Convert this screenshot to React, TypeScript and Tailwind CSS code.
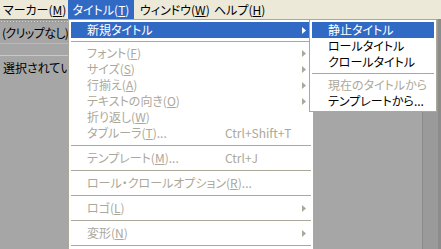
import React from "react";

const FONT = "[font-family:'Noto_Sans_CJK_JP','Liberation_Sans',sans-serif]";

function U({ c }: { c: string }) {
  return <span className="underline underline-offset-[1px]">{c}</span>;
}

function Arrow({ color }: { color: string }) {
  return (
    <svg width="4" height="7" viewBox="0 0 4 7" className="block">
      <path d="M0 0 L4 3.5 L0 7 Z" fill={color} />
    </svg>
  );
}

function Item({
  label,
  shortcut,
  arrow,
  disabled,
  active,
}: {
  label: React.ReactNode;
  shortcut?: string;
  arrow?: boolean;
  disabled?: boolean;
  active?: boolean;
}) {
  const color = active ? "text-white" : disabled ? "text-[#aca899]" : "text-black";
  return (
    <div
      className={`h-[16px] flex items-center pl-[16px] pr-[5px] ${active ? "bg-[#316ac5]" : ""} ${color}`}
    >
      <div className="flex-1 whitespace-nowrap leading-none">{label}</div>
      {shortcut && <div className="w-[75px] whitespace-nowrap leading-none">{shortcut}</div>}
      <div className="w-[6px] flex justify-end">
        {arrow && <Arrow color={active ? "#ffffff" : disabled ? "#aca899" : "#000000"} />}
      </div>
    </div>
  );
}

function Sep({ h = 9 }: { h?: number }) {
  return (
    <div className={`${h === 7 ? "h-[7px]" : "h-[9px]"} flex items-center`}>
      <div className="h-px w-full bg-[#aca899]" />
    </div>
  );
}

export default function App() {
  return (
    <div
      className={`relative w-[441px] h-[249px] overflow-hidden bg-[#a6a6a6] text-[12px] [font-feature-settings:'palt'] ${FONT}`}
    >
      {/* menu bar */}
      <div className="h-[19px] bg-[#ece9d8] flex items-stretch text-black leading-none whitespace-nowrap">
        <div className="flex items-center pl-[3px] w-[68px]">
          マーカー(<U c="M" />)
        </div>
        <div className="flex items-center justify-center w-[66px] bg-[#316ac5] text-white">
          タイトル(<U c="T" />)
        </div>
        <div className="flex items-center pl-[6px] w-[78px]">
          ウィンドウ(<U c="W" />)
        </div>
        <div className="flex items-center pl-[2px]">
          ヘルプ(<U c="H" />)
        </div>
      </div>

      {/* body */}
      <div className="flex h-[230px]">
        <div className="w-[68px] flex flex-col">
          <div className="h-[4px] bg-[#a0a0a0] border-t border-[#7d7d7d] [background-image:radial-gradient(#d8d8d8_0.6px,transparent_0.7px)] [background-size:3px_3px]" />
          <div className="h-[20px] flex items-center pl-[2px] text-black leading-none whitespace-nowrap tracking-[-0.6px]">
            (クリップなし)
          </div>
          <div className="h-px bg-[#b8b8b8]" />
          <div className="h-[11px]" />
          <div className="h-px bg-[#c8c8c8]" />
          <div className="h-[24px] flex items-center pl-[3px] text-black leading-none whitespace-nowrap">
            選択されてい
          </div>
        </div>
        <div className="flex-1" />
        <div className="w-[19px] bg-[#9a9a9a] border-l border-[#8a8a8a] border-r-[3px] border-r-[#8c8c8c]" />
      </div>

      {/* main dropdown */}
      <div className="absolute left-[68px] top-[19px] w-[246px] h-[240px] bg-white border border-[#aca899] p-[2px]">
        <Item label="新規タイトル" arrow active />
        <Sep h={7} />
        <Item label={<>フォント(<U c="F" />)</>} arrow disabled />
        <Item label={<>サイズ(<U c="S" />)</>} arrow disabled />
        <Item label={<>行揃え(<U c="A" />)</>} arrow disabled />
        <Item label={<>テキストの向き(<U c="O" />)</>} arrow disabled />
        <Item label={<>折り返し(<U c="W" />)</>} disabled />
        <Item label={<>タブルーラ(<U c="T" />)...</>} shortcut="Ctrl+Shift+T" disabled />
        <Sep />
        <Item label={<>テンプレート(<U c="M" />)...</>} shortcut="Ctrl+J" disabled />
        <Sep />
        <Item label={<>ロール・クロールオプション(<U c="R" />)...</>} disabled />
        <Sep />
        <Item label={<>ロゴ(<U c="L" />)</>} arrow disabled />
        <Sep />
        <Item label={<>変形(<U c="N" />)</>} arrow disabled />
        <Sep />
      </div>

      {/* submenu */}
      <div className="absolute left-[309px] top-[19px] w-[128px] bg-white border border-[#aca899] p-[2px]">
        <Item label="静止タイトル" active />
        <Item label="ロールタイトル" />
        <Item label="クロールタイトル" />
        <Sep h={7} />
        <Item label="現在のタイトルから" disabled />
        <Item label="テンプレートから..." />
      </div>
    </div>
  );
}
